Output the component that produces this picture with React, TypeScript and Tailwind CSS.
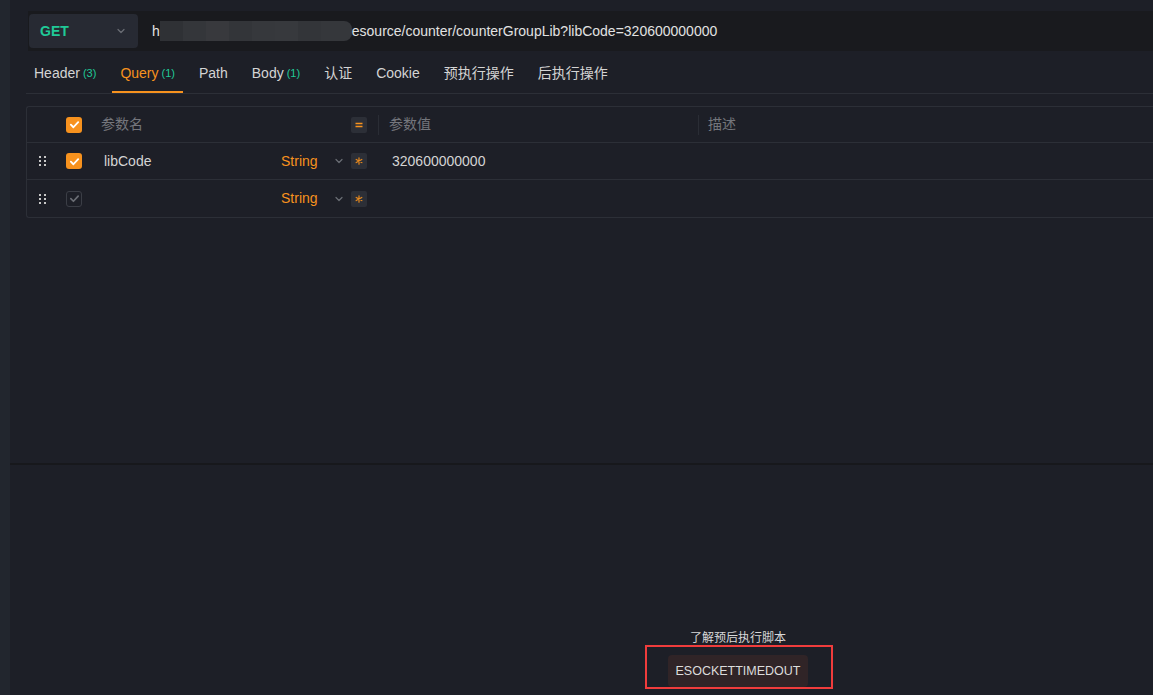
import React from "react";

const font = { fontFamily: '"Liberation Sans", "Noto Sans CJK SC", sans-serif' };

function Dots() {
  return (
    <div className="grid grid-cols-2 gap-x-[3px] gap-y-[2px] w-[7px]">
      {[0, 1, 2, 3, 4, 5].map((i) => (
        <div key={i} className="w-[2px] h-[2px] bg-[#c8c8c8]" />
      ))}
    </div>
  );
}

function Check({ on }: { on: boolean }) {
  return on ? (
    <div className="w-[16px] h-[16px] rounded-[3px] bg-[#f7921e] flex items-center justify-center">
      <svg width="11" height="11" viewBox="0 0 12 12">
        <path d="M2 6.2 L4.8 9 L10 3.4" fill="none" stroke="#fff" strokeWidth="2" strokeLinecap="round" strokeLinejoin="round" />
      </svg>
    </div>
  ) : (
    <div className="w-[16px] h-[16px] rounded-[3px] border border-[#3b3e46] flex items-center justify-center">
      <svg width="11" height="11" viewBox="0 0 12 12">
        <path d="M2 6.2 L4.8 9 L10 3.4" fill="none" stroke="#6b6e75" strokeWidth="1.8" strokeLinecap="round" strokeLinejoin="round" />
      </svg>
    </div>
  );
}

function Chevron({ color = "#6b6e75" }: { color?: string }) {
  return (
    <svg width="10" height="10" viewBox="0 0 10 10">
      <path d="M2 3.5 L5 6.5 L8 3.5" fill="none" stroke={color} strokeWidth="1.2" strokeLinecap="round" strokeLinejoin="round" />
    </svg>
  );
}

function IconBox({ children }: { children: React.ReactNode }) {
  return (
    <div className="w-[16px] h-[16px] rounded-[2px] bg-[#2c2f37] flex items-center justify-center">
      {children}
    </div>
  );
}

function Star() {
  return (
    <IconBox>
      <svg width="10" height="10" viewBox="0 0 10 10">
        <path d="M5 1.8 V8.2 M2.2 3.4 L7.8 6.6 M7.8 3.4 L2.2 6.6" stroke="#e8891d" strokeWidth="1.2" strokeLinecap="round" />
      </svg>
    </IconBox>
  );
}

function Eq() {
  return (
    <IconBox>
      <svg width="10" height="10" viewBox="0 0 10 10">
        <path d="M1.5 3.5 H8.5 M1.5 6.5 H8.5" stroke="#f7921e" strokeWidth="1.6" />
      </svg>
    </IconBox>
  );
}

function Row({ on, name, value, last }: { on: boolean; name: string; value: string; last?: boolean }) {
  return (
    <div className={"flex items-center h-[37px] " + (last ? "" : "border-b border-[#2c2f37]")}>
      <div className="w-[39px] pl-[12px] flex items-center">
        <Dots />
      </div>
      <div className="w-[35px] flex items-center">
        <Check on={on} />
      </div>
      <div className="w-[180px] pl-[3px] text-[14px] text-[#d4d4d4]">{name}</div>
      <div className="w-[70px] flex items-center">
        <span className="text-[14px] text-[#f7921e] w-[53px]">String</span>
        <Chevron />
      </div>
      <Star />
      <div className="w-[22px]" />
      <div className="pl-[3px] text-[14px] text-[#d4d4d4]">{value}</div>
    </div>
  );
}

export default function App() {
  const tabs: { label: string; count?: string; active?: boolean }[] = [
    { label: "Header", count: "(3)" },
    { label: "Query", count: "(1)", active: true },
    { label: "Path" },
    { label: "Body", count: "(1)" },
    { label: "认证" },
    { label: "Cookie" },
    { label: "预执行操作" },
    { label: "后执行操作" },
  ];
  const blur = ["#2f3135", "#34363a", "#38393d", "#333539", "#36383c", "#37393d", "#333539", "#35373b"];
  return (
    <div className="w-[1153px] h-[695px] flex bg-[#1d1f27] overflow-hidden" style={font}>
      <div className="w-[10px] h-full bg-[#22262e] shrink-0" />
      <div className="flex-1 flex flex-col min-w-0">
        {/* top pane */}
        <div className="h-[463px] pl-[16px] pt-[11px] flex flex-col">
          <div className="ml-[2px] h-[40px] bg-[#191a1e] flex items-center pl-[1px]">
            <div className="w-[109px] h-[34px] rounded-[4px] bg-[#272a33] flex items-center justify-between pl-[11px] pr-[12px]">
              <span className="text-[14px] font-bold text-[#20c997]">GET</span>
              <Chevron color="#6b6e75" />
            </div>
            <div className="ml-[14px] flex items-center text-[14px] text-[#e2e2e2]">
              <span>h</span>
              <div className="flex h-[20px] items-stretch">
                {blur.map((c, i) => (
                  <div key={i} className="w-[23px]" style={{ background: c }} />
                ))}
              </div>
              <div className="w-[8px] h-[20px] rounded-r-full bg-[#35373b]" />
              <span>esource/counter/counterGroupLib?libCode=320600000000</span>
            </div>
          </div>
          {/* tabs */}
          <div className="h-[43px] pt-[4px] flex items-stretch gap-2 border-b border-[#2c2f37]">
            {tabs.map((t) => (
              <div
                key={t.label}
                className={
                  "px-2 flex items-center text-[14px] border-b-2 " +
                  (t.active ? "border-[#f7921e] text-[#f7921e]" : "border-transparent text-[#d4d4d4]")
                }
              >
                <span>{t.label}</span>
                {t.count && <span className="ml-[3px] text-[11px] text-[#20c997]">{t.count}</span>}
              </div>
            ))}
          </div>
          {/* table */}
          <div className="mt-[12px] border border-[#2c2f37] border-r-0 rounded-l-[3px]">
            <div className="flex items-center h-[36px] border-b border-[#2c2f37]">
              <div className="w-[39px]" />
              <div className="w-[35px] flex items-center">
                <Check on={true} />
              </div>
              <div className="w-[250px] text-[14px] text-[#74767c]">参数名</div>
              <Eq />
              <div className="w-[22px] flex justify-center">
                <div className="w-px h-[20px] bg-[#2a2d35]" />
              </div>
              <div className="w-[309px] text-[14px] text-[#74767c]">参数值</div>
              <div className="w-px h-[20px] bg-[#2a2d35]" />
              <div className="pl-[9px] text-[14px] text-[#74767c]">描述</div>
            </div>
            <Row on={true} name="libCode" value="320600000000" />
            <Row on={false} name="" value="" last />
          </div>
        </div>
        <div className="h-[2px] bg-[#17181c]" />
        {/* bottom pane */}
        <div className="flex-1 flex flex-col justify-end pb-[8px]">
          <div className="ml-[658px] w-[140px] flex flex-col items-center relative">
            <div className="text-[12px] text-[#d8d8d8] mb-[8px]">了解预后执行脚本</div>
            <div className="w-[140px] h-[32px] rounded-[4px] bg-[#302427] flex items-center justify-center text-[12.5px] text-[#dcdcdc]">
              ESOCKETTIMEDOUT
            </div>
            <div className="absolute left-[-23px] bottom-[-2px] w-[188px] h-[44px] border-2 border-[#f03c3c]" />
          </div>
        </div>
      </div>
    </div>
  );
}
